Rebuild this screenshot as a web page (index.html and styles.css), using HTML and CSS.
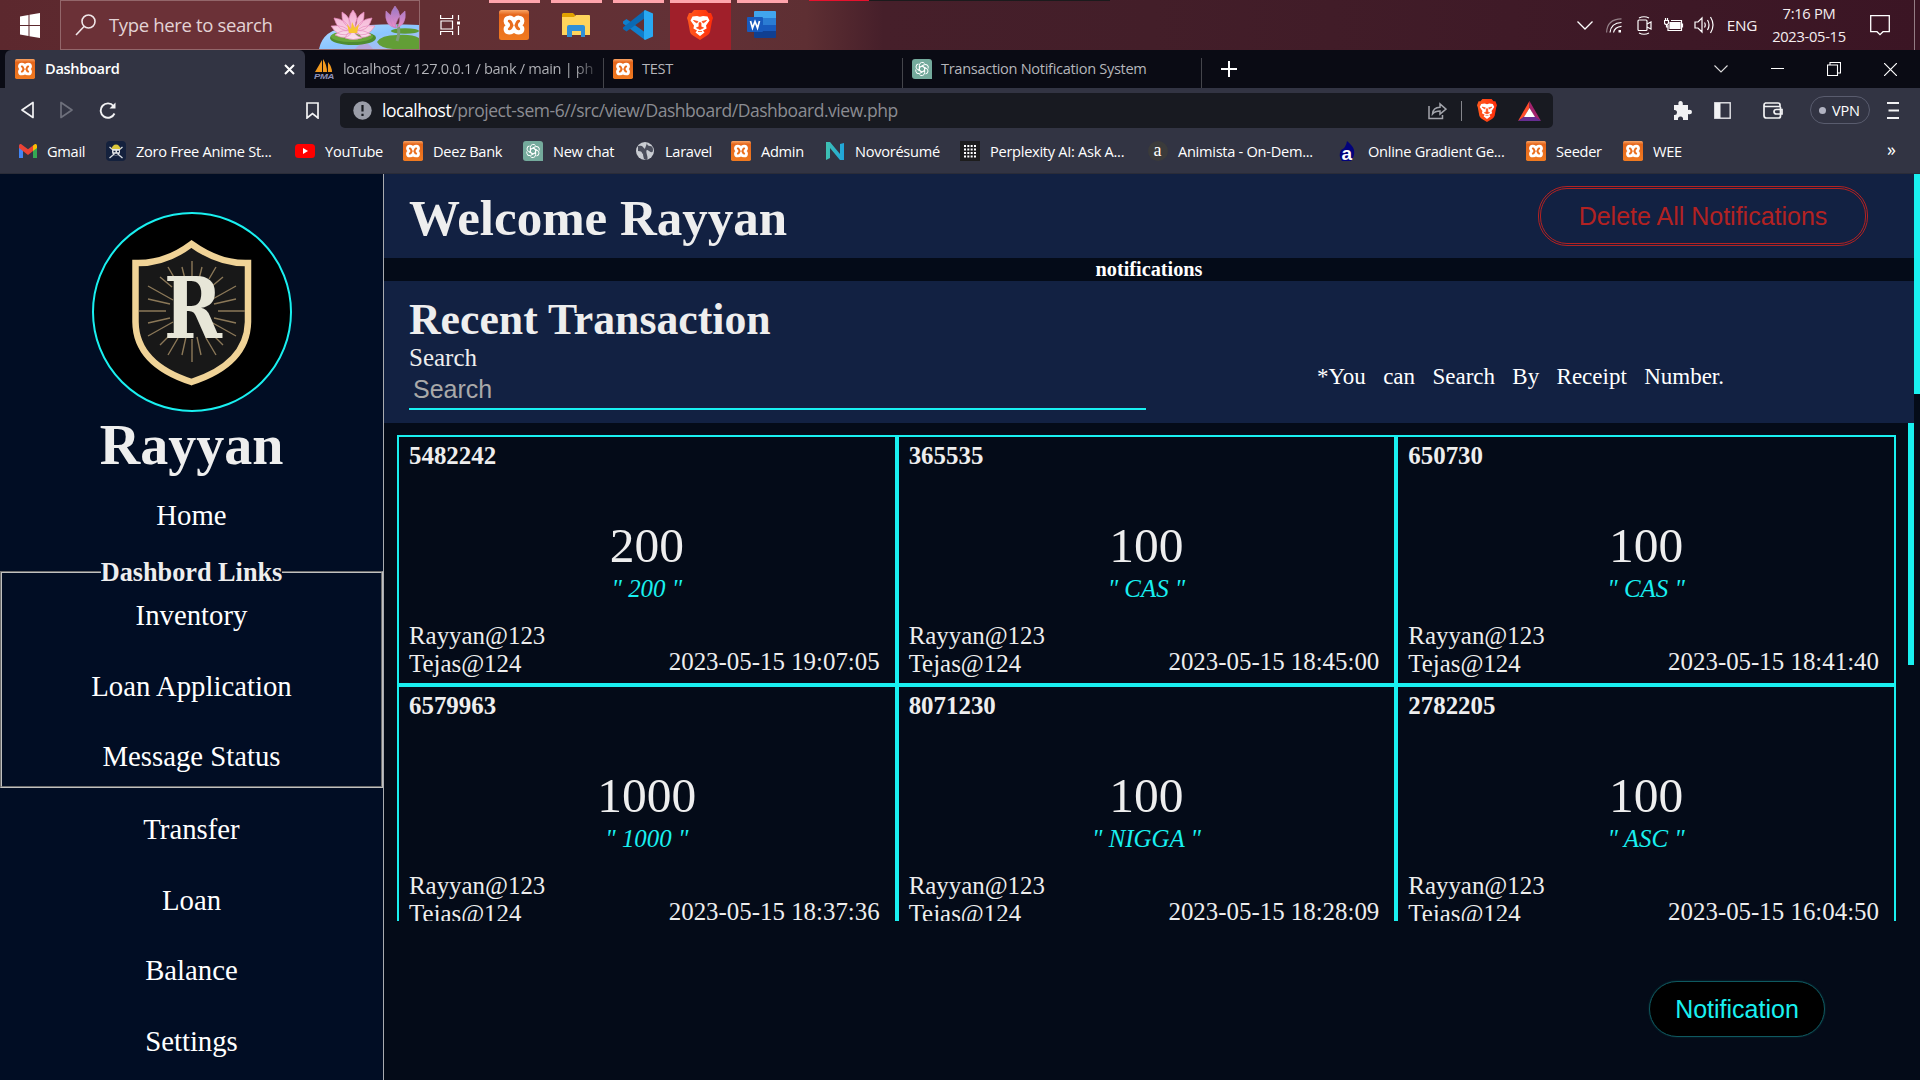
FILE: index.html
```html
<!DOCTYPE html>
<html lang="en">
<head>
<meta charset="utf-8">
<title>Dashboard</title>
<link rel="stylesheet" href="styles.css">
</head>
<body>
<svg class="defs" width="0" height="0">
  <defs>
    <linearGradient id="gOrange" x1="0" y1="0" x2="0" y2="1"><stop offset="0" stop-color="#f9a566"/><stop offset=".16" stop-color="#e5661c"/><stop offset="1" stop-color="#f07a20"/></linearGradient>
    <linearGradient id="gBrave" x1="0" y1="0" x2="1" y2="0"><stop offset="0" stop-color="#ff5a1e"/><stop offset="1" stop-color="#ff2d0a"/></linearGradient>
    <linearGradient id="gNovo" x1="0" y1="0" x2="1" y2="0"><stop offset="0" stop-color="#3fc1b0"/><stop offset="1" stop-color="#1fa5dc"/></linearGradient>
    <linearGradient id="gWater" x1="0" y1="0" x2="1" y2="1"><stop offset="0" stop-color="#b4dcff"/><stop offset=".5" stop-color="#8cc6ff"/><stop offset="1" stop-color="#b7b8e6"/></linearGradient>
    <linearGradient id="gPetal" x1="0" y1="0" x2="0" y2="1"><stop offset="0" stop-color="#f3a6cf"/><stop offset="1" stop-color="#fbe3ee"/></linearGradient>
    <linearGradient id="gBud" x1="0" y1="0" x2="0" y2="1"><stop offset="0" stop-color="#9577c4"/><stop offset="1" stop-color="#ee8fc8"/></linearGradient>
    <symbol id="xampp" viewBox="0 0 30 30">
      <rect width="30" height="30" rx="2.5" fill="url(#gOrange)"/>
      <path d="M15 11C13 6.500 6.700 6.700 6.700 11.200C6.700 13.800 9 14 9 15C9 16.200 6.700 16.500 6.700 19C6.700 23.500 13 23.500 15 19.500C17 23.500 23.300 23.500 23.300 19C23.300 16.500 21 16.200 21 15C21 14 23.300 13.800 23.300 11.200C23.300 6.700 17 6.500 15 11Z" fill="none" stroke="#fff" stroke-width="4.200"/>
    </symbol>
    <symbol id="gpt" viewBox="0 0 20 20">
      <path d="M3 0h14a3 3 0 0 1 3 3v17H3a3 3 0 0 1-3-3V3a3 3 0 0 1 3-3z" fill="#74aa9c"/>
      <g fill="none" stroke="#fff" stroke-width="1" stroke-linejoin="round">
        <path id="gptArm" d="M7.400 10.800V6.200a2.900 2.900 0 0 1 5.200-1.700M7.400 8.500l4-2.300"/>
        <use href="#gptArm" transform="rotate(60 10 10)"/><use href="#gptArm" transform="rotate(120 10 10)"/><use href="#gptArm" transform="rotate(180 10 10)"/><use href="#gptArm" transform="rotate(240 10 10)"/><use href="#gptArm" transform="rotate(300 10 10)"/>
      </g>
    </symbol>
    <symbol id="brave" viewBox="0 0 26 30">
      <path d="M7 0h12l2.500 3L24 3l2 5-1 3-2 11q-.6 2-3 3.600L13 30l-7-4.400Q3.600 24 3 22L1 11 0 8l2-5 2.500 0z" fill="url(#gBrave)"/>
      <path d="M5.500 6.500 10 6l3 .7 3-.7 4.500.5 2 4-3.500 5 .6 3-3.600 2 1.500 2L13 26l-4.500-3.500 1.500-2-3.600-2 .6-3L3.500 10.500z" fill="#fff"/>
      <path d="M6.500 10.500l4.500 1-1.300 1.500zM19.500 10.500l-4.500 1 1.300 1.500zM9.500 17.800l3.500 1.700 3.500-1.700-2.500-1v-4h-2v4zM11 21.500h4" fill="#ff4b17" stroke="#ff4b17" stroke-width=".8"/>
    </symbol>
  </defs>
</svg>

<header class="taskbar">
  <div class="start"><svg width="20" height="25" viewBox="0 0 20 25"><path d="M0 3.500 8.500 2v10H0zM9.500 1.800 20 0v12H9.500zM0 13h8.500v10L0 21.500zM9.500 13H20v12L9.500 23.200z" fill="#fff"/></svg></div>
  <div class="task-search">
    <svg width="22" height="22" viewBox="0 0 22 22" fill="none" stroke="#f0e6e8" stroke-width="1.600"><circle cx="13.500" cy="7.500" r="6.500"/><path d="M9 12.500 1 21"/></svg>
    <span>Type here to search</span>
    <svg class="lotus" width="100" height="48" viewBox="0 0 100 48">
      <path d="M0 48Q4 28 30 26Q60 22 100 24V48z" fill="url(#gWater)"/>
      <path d="M36 48q10-12 18 0z" fill="#c795c9" opacity=".6"/>
      <ellipse cx="34" cy="37" rx="23" ry="7" fill="#4f8c31"/><ellipse cx="33" cy="35.500" rx="21" ry="5.500" fill="#69a73b"/>
      <path d="M58 41q4-7 20-7 15-1 22 3v11H74q-13-1-16-7z" fill="#629e36"/><ellipse cx="86" cy="30" rx="14" ry="2.800" fill="#5d9a35"/>
      <path d="M78 40q3-8 1-17" stroke="#7e9c78" stroke-width="3" fill="none"/>
      <g fill="url(#gPetal)" stroke="#e78bbd" stroke-width=".7">
        <path d="M34 9q7 8 2 18h-4q-5-10 2-18zM23 11q9 5 9 16-10-3-9-16zM45 11q-9 5-9 16 10-3 9-16zM15 17q12 1 17 12-13 3-17-12zM53 17q-12 1-17 12 13 3 17-12zM12 25q14-2 20 7-12 6-20-7zM56 25q-14-2-20 7 12 6 20-7zM16 34q8-7 17-3-5 9-17 3zM52 34q-8-7-17-3 5 9 17 3zM26 37q3-7 8-7t9 7q-9 3-17 0z"/>
      </g>
      <path d="M28 23l4 5 1-7 3 6 4-4-2 9h-8z" fill="#f7c631"/>
      <g fill="url(#gBud)"><path d="M76 5q8 9 3 21h-5q-6-11 2-21zM67 10q9 7 10 17-12-2-10-17zM86 10q-9 7-10 17 12-2 10-17z" stroke="#c47fc5" stroke-width=".6"/></g>
    </svg>
  </div>
  <nav class="apps">
    <div class="app taskview"><svg width="21" height="20" viewBox="0 0 21 20" fill="none" stroke="#fff" stroke-width="1.200"><path d="M.6 0v3.500h12V0M.6 20v-3.500h12V20M1 6h11.500v8H1zM18.500 0v5M18.500 11v9"/><path d="M17 6.500h3v3h-3z" fill="#fff" stroke="none"/></svg></div>
    <div class="app open"><svg width="30" height="30"><use href="#xampp"/></svg></div>
    <div class="app open"><svg width="28" height="24" viewBox="0 0 28 24"><path d="M1 0h10l2 2v4H0V1z" fill="#e0a100"/><path d="M0 4h12l2-2h13q1 0 1 1v19H0z" fill="#ffd45c"/><path d="M5 24V14q0-2 2-2h14q2 0 2 2v10h-4v-6h-9v6z" fill="#2f8fd8"/></svg></div>
    <div class="app open"><svg width="30" height="30" viewBox="0 0 30 30"><path d="M0 11.500 3.500 9 23 23l-1 7L0 13.500z" fill="#0f7fcc"/><path d="M0 19 3.500 21.500 22 8V0L0 17.500z" fill="#0a6ab4"/><path d="M22 0l8 3.500v23L22 30l-1-1V1z" fill="#29a9f2"/></svg></div>
    <div class="app open current"><svg width="26" height="30"><use href="#brave"/></svg></div>
    <div class="app open word"><svg width="30" height="28" viewBox="0 0 30 28"><path d="M7 1q0-1 1-1h20q1 0 1 1v6H7z" fill="#41a5ee"/><path d="M7 7h22v7H7z" fill="#2b7cd3"/><path d="M7 14h22v6H7z" fill="#185abd"/><path d="M7 20h22v6q0 1-1 1H8q-1 0-1-1z" fill="#103f91"/><rect y="6" width="16" height="15" rx="1" fill="#185abd"/><path d="M3.500 10 5.500 17 8 10.500 10.500 17 12.500 10" fill="none" stroke="#fff" stroke-width="1.700"/></svg></div>
  </nav>
  <div class="tray">
    <svg width="16" height="9" viewBox="0 0 16 9" fill="none" stroke="#fff" stroke-width="1.300"><path d="M.5.5 8 8 15.500.5"/></svg>
    <svg width="16" height="15" viewBox="0 0 16 15" fill="none" stroke="#fff" stroke-width="1.200"><path d="M.6 14.500Q1 1 15.500.8" opacity=".45"/><path d="M4 14.500Q5 5 15.500 4.500M7.500 14.500Q8.500 9 15.500 8.300"/><path d="M12.500 14.500v-2.500h2.500v2.500z" fill="#fff" stroke="none"/></svg>
    <svg width="16" height="19" viewBox="0 0 16 19" fill="none" stroke="#fff" stroke-width="1.200"><rect x="1" y="4" width="9" height="10.500" rx="1"/><path d="M10 8l4-2v7l-4-2M2 2Q7-.5 12 2M2 17q5 2.500 10 0"/></svg>
    <svg width="20" height="14" viewBox="0 0 20 14" fill="none" stroke="#fff" stroke-width="1.200"><path d="M4 7v5.500h13.500V2.500H7M18.500 5.500v4M.5 2.500h4v2q0 2-2 2t-2-2zM1.500 0v2M3.500 0v2M2.500 6v3h2"/><path d="M6 4.500h10v6H6z" fill="#fff"/></svg>
    <svg width="21" height="18" viewBox="0 0 21 18" fill="none" stroke="#fff" stroke-width="1.200"><path d="M1 6h3l4-4v14l-4-4H1zM10.500 6.500q1.500 2.500 0 5M13.500 4q3 5 0 10M16.500 1q5 8 0 16"/></svg>
    <span class="lang">ENG</span>
    <div class="clock"><span>7:16 PM</span><span>2023-05-15</span></div>
    <svg class="note" width="20" height="21" viewBox="0 0 20 21" fill="none" stroke="#fff" stroke-width="1.300"><path d="M.7.700h18.600v16H13l-3 3-3-3H.7z"/></svg>
  </div>
  <div class="progress"></div>
</header>

<div class="tabs">
  <div class="tab active"><svg width="20" height="20"><use href="#xampp"/></svg><span>Dashboard</span><svg class="close" width="11" height="11" viewBox="0 0 11 11" stroke="#fff" stroke-width="2"><path d="M1 1l9 9M10 1l-9 9"/></svg></div>
  <div class="tab"><svg width="20" height="20" viewBox="0 0 20 20"><path d="M8 1v12H1zM9 0q4 6 4 13H9zM14 3q4 5 4 10h-4z" fill="#f29a1f"/><text x="0" y="19.500" textLength="20" lengthAdjust="spacingAndGlyphs" class="pma">PMA</text></svg><span class="fade">localhost / 127.0.0.1 / bank / main | ph</span></div>
  <div class="tab"><svg width="20" height="20"><use href="#xampp"/></svg><span>TEST</span></div>
  <div class="tab"><svg width="20" height="20"><use href="#gpt"/></svg><span>Transaction Notification System</span></div>
  <svg class="plus" width="16" height="16" viewBox="0 0 16 16" stroke="#fff" stroke-width="2"><path d="M8 0v16M0 8h16"/></svg>
  <div class="window-buttons">
    <svg width="14" height="8" viewBox="0 0 14 8" fill="none" stroke="#ddd" stroke-width="1.100"><path d="M.5.5 7 7 13.500.5"/></svg>
    <svg width="13" height="14" viewBox="0 0 13 14" stroke="#fff"><path d="M0 6.500h13"/></svg>
    <svg width="14" height="14" viewBox="0 0 14 14" fill="none" stroke="#fff" stroke-width="1.100"><path d="M.5 3h10v10.500H.5zM3 3V.5h10.500V11h-3"/></svg>
    <svg width="13" height="13" viewBox="0 0 13 13" stroke="#fff" stroke-width="1.200"><path d="M0 0l13 13M13 0 0 13"/></svg>
  </div>
</div>

<div class="toolbar">
  <svg width="13" height="18" viewBox="0 0 13 18" fill="none" stroke="#f2f2f4" stroke-width="1.700" stroke-linejoin="round"><path d="M12 1.500v15L1 9z"/></svg>
  <svg width="13" height="18" viewBox="0 0 13 18" fill="none" stroke="#6e707c" stroke-width="1.700" stroke-linejoin="round"><path d="M1 1.500v15L12 9z"/></svg>
  <svg width="18" height="17" viewBox="0 0 18 17" fill="none" stroke="#f2f2f4" stroke-width="1.900"><path d="M14.500 4A7.200 7.200 0 1 0 15.500 11.500"/><path d="M16.500.5v6h-6z" fill="#f2f2f4" stroke="none"/></svg>
  <svg class="mark" width="13" height="17" viewBox="0 0 13 17" fill="none" stroke="#f2f2f4" stroke-width="1.700"><path d="M1 1h11v15l-5.500-4.500L1 16z"/></svg>
  <div class="address">
    <svg width="19" height="19" viewBox="0 0 19 19"><circle cx="9.500" cy="9.500" r="9.200" fill="#9a9da8"/><path d="M9.500 4v6.500M9.500 12.800v2.200" stroke="#17191f" stroke-width="2.200"/></svg>
    <span class="url"><b>localhost</b>/project-sem-6//src/view/Dashboard/Dashboard.view.php</span>
    <svg width="19" height="18" viewBox="0 0 19 18" fill="none" stroke="#a2a4ab" stroke-width="1.500"><path d="M1 4v12.500h13.500V13"/><path d="M4.500 12Q5 5.500 12 5.300V2l6 5.200-6 5V9Q7 9 4.500 12z"/></svg>
    <i class="bar"></i>
    <svg width="20" height="23"><use href="#brave"/></svg>
    <svg width="23" height="20" viewBox="0 0 23 20"><path d="M11.500 0v7L6 16.500 0 20z" fill="#ff4c2b"/><path d="M11.500 0 23 20l-6-3.500L11.500 7z" fill="#a3226d"/><path d="M0 20l6-4.500h11L23 20z" fill="#662d91"/><path d="M11.500 7 17 16H6z" fill="#fff"/></svg>
  </div>
  <div class="tools">
    <svg width="19" height="19" viewBox="0 0 19 19"><path d="M1 4h4.500Q4.800 0 7.500 0T9.800 4H15v5q4-.8 4 2t-4 2v6H10q.5-3.500-2.500-3.500T5 19H1v-5q3 .3 3-2.500T1 9z" fill="#f2f2f4"/></svg>
    <svg width="17" height="17" viewBox="0 0 17 17"><rect x=".8" y=".8" width="15.400" height="15.400" fill="none" stroke="#e6e6ea" stroke-width="1.400"/><path d="M1 1h5.500v15H1z" fill="#f2f2f4"/></svg>
    <svg width="20" height="17" viewBox="0 0 20 17" fill="none" stroke="#f2f2f4" stroke-width="1.700"><path d="M1 3v10.500Q1 16 3.500 16h12q2 0 2-2V5.500q0-1-1-1H2.500Q1 4.500 1 3t1.500-2H15q2 0 2 2v1"/><path d="M19 7.500h-5.500q-2.500 0-2.500 2.200T13.500 12H19z"/></svg>
    <div class="vpn"><i></i>VPN</div>
    <svg width="12" height="17" viewBox="0 0 12 17" stroke="#f2f2f4" stroke-width="1.800"><path d="M0 1h12M1.500 8.500H12M0 16h12"/></svg>
  </div>
</div>

<div class="bookmarks">
  <a><svg width="20" height="20" viewBox="0 0 20 20"><path d="M1 17V4l4 3v10z" fill="#4285f4"/><path d="M15 17V7l4-3v13z" fill="#34a853"/><path d="M15 4.500 17 3q2-.5 2 2v2l-4 3z" fill="#fbbc04"/><path d="M1 7V5q0-2.500 2-2l7 5.300L15 4.500V10l-5 4z" fill="#ea4335"/></svg>Gmail</a>
  <a><svg width="20" height="20" viewBox="0 0 20 20"><rect width="20" height="20" rx="4" fill="#14213d"/><path d="M3.500 6l13 11M16.500 6l-13 11" stroke="#d8dce0" stroke-width="1.300"/><circle cx="10" cy="10.500" r="4" fill="#e4e6e8"/><path d="M5.500 8q1-4.500 4.500-4.500t4.500 4.500z" fill="#d9c63c"/><path d="M7.500 10.500h2M11 10.500h2M8.500 13.500h3" stroke="#14213d" stroke-width="1.500"/></svg>Zoro Free Anime St...</a>
  <a><svg width="20" height="20" viewBox="0 0 20 20"><rect y="3" width="20" height="14" rx="3.500" fill="#f00"/><path d="M8 7l5 3-5 3z" fill="#fff"/></svg>YouTube</a>
  <a><svg width="20" height="20"><use href="#xampp"/></svg>Deez Bank</a>
  <a><svg width="20" height="20"><use href="#gpt"/></svg>New chat</a>
  <a><svg width="20" height="20" viewBox="0 0 20 20"><circle cx="10" cy="10" r="9" fill="#c9ccd2"/><path d="M3 5q4-1 5 1t3 2-1 3-3 1-4-2M12 2q0 3 3 3t3 4-4 1-2 4-3 4q-1-3-1-5" fill="#4b4e5c"/></svg>Laravel</a>
  <a><svg width="20" height="20"><use href="#xampp"/></svg>Admin</a>
  <a><svg width="20" height="20" viewBox="0 0 20 20"><path d="M1 1h4l10 12V3l4-1v17h-4L5 7v10l-4 2z" fill="url(#gNovo)"/></svg>Novorésumé</a>
  <a><svg width="20" height="20" viewBox="0 0 20 20"><path d="M0 0h20v20H0z" fill="#1d1d1d"/><path d="M4 5h12M4 8.500h12M4 12h12M4 15.500h12" stroke="#fff" stroke-width="2" stroke-dasharray="2 1.330"/></svg>Perplexity AI: Ask A...</a>
  <a><svg width="20" height="20" viewBox="0 0 20 20"><circle cx="10" cy="10" r="10" fill="#3b3b3b"/><text x="5.500" y="15" class="ico-a serif">a</text></svg>Animista - On-Dem...</a>
  <a><svg width="20" height="20" viewBox="0 0 20 20"><path d="M9 0q6 5 7 9 1 6-3 11H4Q0 15 3 9q5-2 6-9z" fill="#02027c"/><text x="3.500" y="18.500" class="ico-a bold">a</text></svg>Online Gradient Ge...</a>
  <a><svg width="20" height="20"><use href="#xampp"/></svg>Seeder</a>
  <a><svg width="20" height="20"><use href="#xampp"/></svg>WEE</a>
  <span class="more">»</span>
</div>

<div class="page">
  <aside class="sidebar">
    <div class="avatar">
      <svg width="196" height="196" viewBox="0 0 196 196">
        <path d="M97.500 30Q125 50 154 49V108Q153 150 97.500 168Q42 150 41.500 108V49Q71 50 97.500 30z" fill="#181818" stroke="#f0d397" stroke-width="6.500"/>
        <g stroke="#8b7858" stroke-width="1.400">
          <path d="M98 47v18M98 148V125M45 97h27M151 97h-27M54 72l25 14M142 72l-25 14M54 122l25-14M142 122l-25-14M54 85l22 5M142 85l-22 5M54 109l22-5M142 109l-22-5M74 53l7 12M122 53l-7 12M74 141l10-17M122 141l-10-17M88 53l3 12M108 53l-3 12M88 141l4-18M107 141l-4-18M66 63l12 10M129 63l-12 10M66 131l12-12M129 131l-12-12"/>
        </g>
        <text x="99" y="124" text-anchor="middle" textLength="58" lengthAdjust="spacingAndGlyphs" class="crest">R</text>
      </svg>
    </div>
    <h1>Rayyan</h1>
    <a>Home</a>
    <fieldset>
      <legend>Dashbord Links</legend>
      <div class="links"><a>Inventory</a><a>Loan Application</a><a>Message Status</a></div>
    </fieldset>
    <div class="links"><a>Transfer</a><a>Loan</a><a>Balance</a><a>Settings</a></div>
  </aside>

  <main>
    <section class="welcome"><h1>Welcome Rayyan</h1><button class="delete">Delete All Notifications</button></section>
    <h4>notifications</h4>
    <section class="recent">
      <div class="find">
        <h2>Recent Transaction</h2>
        <label for="q">Search</label>
        <input id="q" placeholder="Search">
      </div>
      <p>*You can Search By Receipt Number.</p>
    </section>
    <section class="list">
      <div class="cards">
        <article><b>5482242</b><div class="sum">200</div><em>" 200 "</em><footer><span>Rayyan@123<br>Tejas@124</span><time>2023-05-15 19:07:05</time></footer></article>
        <article><b>365535</b><div class="sum">100</div><em>" CAS "</em><footer><span>Rayyan@123<br>Tejas@124</span><time>2023-05-15 18:45:00</time></footer></article>
        <article><b>650730</b><div class="sum">100</div><em>" CAS "</em><footer><span>Rayyan@123<br>Tejas@124</span><time>2023-05-15 18:41:40</time></footer></article>
        <article><b>6579963</b><div class="sum">1000</div><em>" 1000 "</em><footer><span>Rayyan@123<br>Tejas@124</span><time>2023-05-15 18:37:36</time></footer></article>
        <article><b>8071230</b><div class="sum">100</div><em>" NIGGA "</em><footer><span>Rayyan@123<br>Tejas@124</span><time>2023-05-15 18:28:09</time></footer></article>
        <article><b>2782205</b><div class="sum">100</div><em>" ASC "</em><footer><span>Rayyan@123<br>Tejas@124</span><time>2023-05-15 16:04:50</time></footer></article>
      </div>
      <div class="list-thumb"></div>
    </section>
    <button class="notify">Notification</button>
  </main>
  <div class="page-thumb"></div>
</div>
</body>
</html>
```
FILE: styles.css
```css
* { box-sizing: border-box; }
body {
  margin: 0;
  width: 1920px;
  height: 1080px;
  overflow: hidden;
  background: #040b18;
  color: #fff;
  font-family: "Liberation Serif", "Times New Roman", serif;
}
h1, h2, h4, p { margin: 0; }
svg { display: block; flex: none; }
.defs { position: absolute; }

/* Windows taskbar */
.taskbar, .tabs, .toolbar, .bookmarks { font-family: "Open Sans", "Noto Sans", sans-serif; display: flex; align-items: center; }
.taskbar {
  position: relative;
  height: 50px;
  background: linear-gradient(90deg, #5c282e 0, #622f33 22%, #623136 36%, #5e2f33 42%, #461f2a 46%, #431e29 60%, #3d1826 88%, #3b1524 100%);
}
.start { width: 60px; padding-left: 20px; }
.task-search {
  display: flex;
  align-items: center;
  width: 360px;
  height: 50px;
  padding-left: 14px;
  border: 1px solid #93666a;
  background: #6b3137;
  font-size: 18.5px;
  letter-spacing: -0.35px;
  color: #e3d3d5;
  overflow: hidden;
}
.task-search span { margin: -2px 0 0 12px; flex: 1; white-space: nowrap; }
.apps { display: flex; height: 50px; }
.app { display: flex; align-items: center; justify-content: center; width: 51px; height: 50px; margin-right: 11px; padding-right: 1px; }
.app.taskview { width: 61px; margin-right: 8px; }
.app.open { border-top: 3px solid #ffa4ac; padding-bottom: 3px; }
.app.current { width: 61px; margin-left: -5px; margin-right: 6px; background: #a01f2a; }
.app.word { padding-right: 2px; }
.tray { display: flex; align-items: center; margin-left: auto; height: 50px; padding-right: 31px; border-right: 1px solid #947c84; margin-right: 5px; gap: 13px; color: #f5eef0; letter-spacing: -0.3px; }
.tray svg:nth-child(3) { margin-left: 2px; }
.tray svg:nth-child(4) { margin-left: -2px; }
.tray svg:nth-child(5) { margin-left: -3px; }
.tray .note { margin-right: -7px; }
.lang { font-size: 15.3px; margin: 0 0 1px -1px; }
.clock { display: flex; flex-direction: column; align-items: center; width: 78px; margin: 0 9px 0 0; font-size: 14.7px; line-height: 23px; }
.progress { position: absolute; left: 809px; top: 0; width: 301px; height: 1px; background: linear-gradient(90deg, #e8112d 60px, #1b1a1c 60px); }

/* browser tab strip */
.tabs { height: 38px; padding-left: 5px; background: #0a0b14; }
.tab { display: flex; align-items: center; gap: 9px; width: 299px; height: 38px; padding-left: 9px; font-size: 14.6px; letter-spacing: -0.32px; color: #b5b6bb; white-space: nowrap; border-right: 1px solid #3b3c42; border-image: linear-gradient(transparent 9px, #44454b 9px) 1; }
.tab span { padding-bottom: 2px; }
.tab.active { width: 300px; padding-left: 10px; gap: 10px; border: 0; border-radius: 6px 6px 0 0; background: #323443; color: #fff; font-weight: 600; }
.tab .close { margin: 0 10px 0 auto; }
.fade { width: 254px; overflow: hidden; background: linear-gradient(90deg, #b5b6bb 230px, #33343b 252px); background-clip: text; -webkit-background-clip: text; color: transparent; }
.pma { font: italic 700 8px "Liberation Sans", sans-serif; fill: #8d90b8; }
.plus { margin-left: 19px; }
.window-buttons { display: flex; align-items: center; gap: 43px; margin-left: auto; padding-right: 23px; }

/* browser toolbar */
.toolbar { height: 44px; padding: 0 21px; background: #323443; }
.toolbar > svg { margin-right: 26px; }
.toolbar > .mark { margin-left: 163px; margin-right: 21px; }
.address { display: flex; align-items: center; width: 1213px; height: 35px; margin-top: 1px; padding: 0 12px 0 13px; border-radius: 5px; background: #181a21; }
.url { flex: 1; margin: -1px 0 0 10px; font-size: 17.5px; letter-spacing: -0.45px; color: #8b8c92; white-space: nowrap; }
.url b { font-weight: 400; color: #fff; }
.bar { width: 1px; height: 20px; margin: 0 15px 0 14px; background: #85868c; }
.address svg:last-child { margin-left: 21px; }
.tools { display: flex; align-items: center; margin-left: auto; }
.tools svg:nth-child(1) { margin-right: 22px; }
.tools svg:nth-child(2) { margin-right: 32px; }
.tools svg:nth-child(3) { margin-right: 27px; }
.vpn { display: flex; align-items: center; gap: 6px; width: 60px; height: 28px; margin-right: 17px; padding-left: 8px; border: 1px solid #595c6e; border-radius: 14px; font-size: 14.5px; letter-spacing: -0.2px; }
.vpn i { width: 7px; height: 7px; border-radius: 50%; background: #b1b3c2; }

/* bookmarks bar */
.bookmarks { height: 42px; padding: 0 0 4px 18px; background: #323443; border-bottom: 1px solid #2a2c38; }
.bookmarks a { display: flex; align-items: center; gap: 10px; font-size: 14.6px; letter-spacing: -0.28px; white-space: nowrap; width: 97px; }
.bookmarks a:nth-child(1) { width: 88px; gap: 9px; }
.bookmarks a:nth-child(2) { width: 189px; }
.bookmarks a:nth-child(3) { width: 108px; }
.bookmarks a:nth-child(4) { width: 120px; }
.bookmarks a:nth-child(5) { width: 112px; }
.bookmarks a:nth-child(6) { width: 96px; }
.bookmarks a:nth-child(7) { width: 94px; }
.bookmarks a:nth-child(8) { width: 135px; }
.bookmarks a:nth-child(9) { width: 188px; }
.bookmarks a:nth-child(10) { width: 190px; }
.bookmarks a:nth-child(11) { width: 188px; }
.more { margin-left: auto; margin-right: 24px; font-size: 18px; line-height: 20px; padding-bottom: 4px; }
.ico-a { fill: #fff; font-size: 18px; }
.ico-a.serif { font-family: "Liberation Serif", serif; }
.ico-a.bold { font-family: "Liberation Sans", sans-serif; font-weight: 700; font-size: 19px; }

/* dashboard page */
.page { display: grid; grid-template-columns: 384px 1530px 6px; height: 906px; }
.sidebar { display: flex; flex-direction: column; align-items: center; padding-top: 38px; background: #010d24; border-right: 1px solid #a9abb0; }
.avatar { width: 200px; height: 200px; border: 2px solid #19f0f0; border-radius: 50%; background: #000; }
.crest { font: 700 84px "DejaVu Serif", serif; fill: #e7e6d8; }
.sidebar h1 { margin: 1px 0 -1px; font-size: 56px; line-height: 64px; color: #eee; }
.sidebar a { font-size: 28.75px; line-height: 32px; }
.sidebar > a { margin-top: 23px; }
fieldset { width: 383px; margin: 26px 0 25px; padding: 12px 0 14px; border: 2px groove #c0c0c0; }
legend { margin: 0 auto; padding: 1px 0 0; font-size: 26.25px; font-weight: 700; line-height: 29px; color: #eee; }
.links { display: flex; flex-direction: column; align-items: center; gap: 38.6px; }

main { display: flex; flex-direction: column; align-items: stretch; }
.welcome { display: flex; align-items: center; justify-content: space-between; height: 84px; padding: 0 46px 0 25px; background: #122142; }
.welcome h1 { font-size: 51px; line-height: 56px; color: #eee; padding-top: 3px; }
button, input { font: 25px "Liberation Sans", Arial, sans-serif; }
.delete { width: 330px; height: 60px; border: 3px double #b22222; border-radius: 29px; background: none; color: #b22222; }
h4 { height: 23px; font-size: 20.3px; line-height: 23px; text-align: center; }
.recent { display: flex; height: 142px; padding: 0 0 0 25px; background: #122142; }
.find { display: flex; flex-direction: column; width: 737px; padding-top: 13px; color: #eee; }
.find h2 { font-size: 43.75px; line-height: 50px; }
.find label { font-size: 25px; line-height: 28px; }
.find input { width: 737px; height: 38px; padding: 2px 4px 3px; border: 0; border-bottom: 2px solid #19f0f0; background: none; outline: none; }
.find input::placeholder { color: #a9a9a9; opacity: 1; }
.recent p { margin: 82px 0 0 171px; font-size: 23px; line-height: 28px; word-spacing: 11.6px; }
.list { display: flex; justify-content: space-between; height: 498px; padding-left: 13px; overflow: hidden; }
.cards { display: grid; grid-template-columns: repeat(3, 1fr); grid-auto-rows: 250px; width: 1499px; margin-top: 12px; }
.list-thumb { width: 6px; height: 242px; background: #19f0f0; }
article { display: flex; flex-direction: column; border: 2px solid #19f0f0; padding: 5px 15px 0 10px; color: #eee; font-size: 24.9px; line-height: 28px; }
.sum { margin-top: 48px; padding-left: 5px; font-size: 49.5px; line-height: 56px; text-align: center; }
article em { padding-left: 5px; color: #19f0f0; text-align: center; margin-top: 1px; }
article footer { display: flex; justify-content: space-between; margin-top: 19px; }
article time { padding-top: 26px; }
.notify { align-self: flex-end; width: 176px; height: 56px; margin: 60px 89px 0 0; border: 1px solid #0f5960; border-radius: 28px; background: #000; color: #19f0f0; box-shadow: 0 0 2px #0a3a40; }
.page-thumb { height: 220px; background: #19f0f0; }
```
